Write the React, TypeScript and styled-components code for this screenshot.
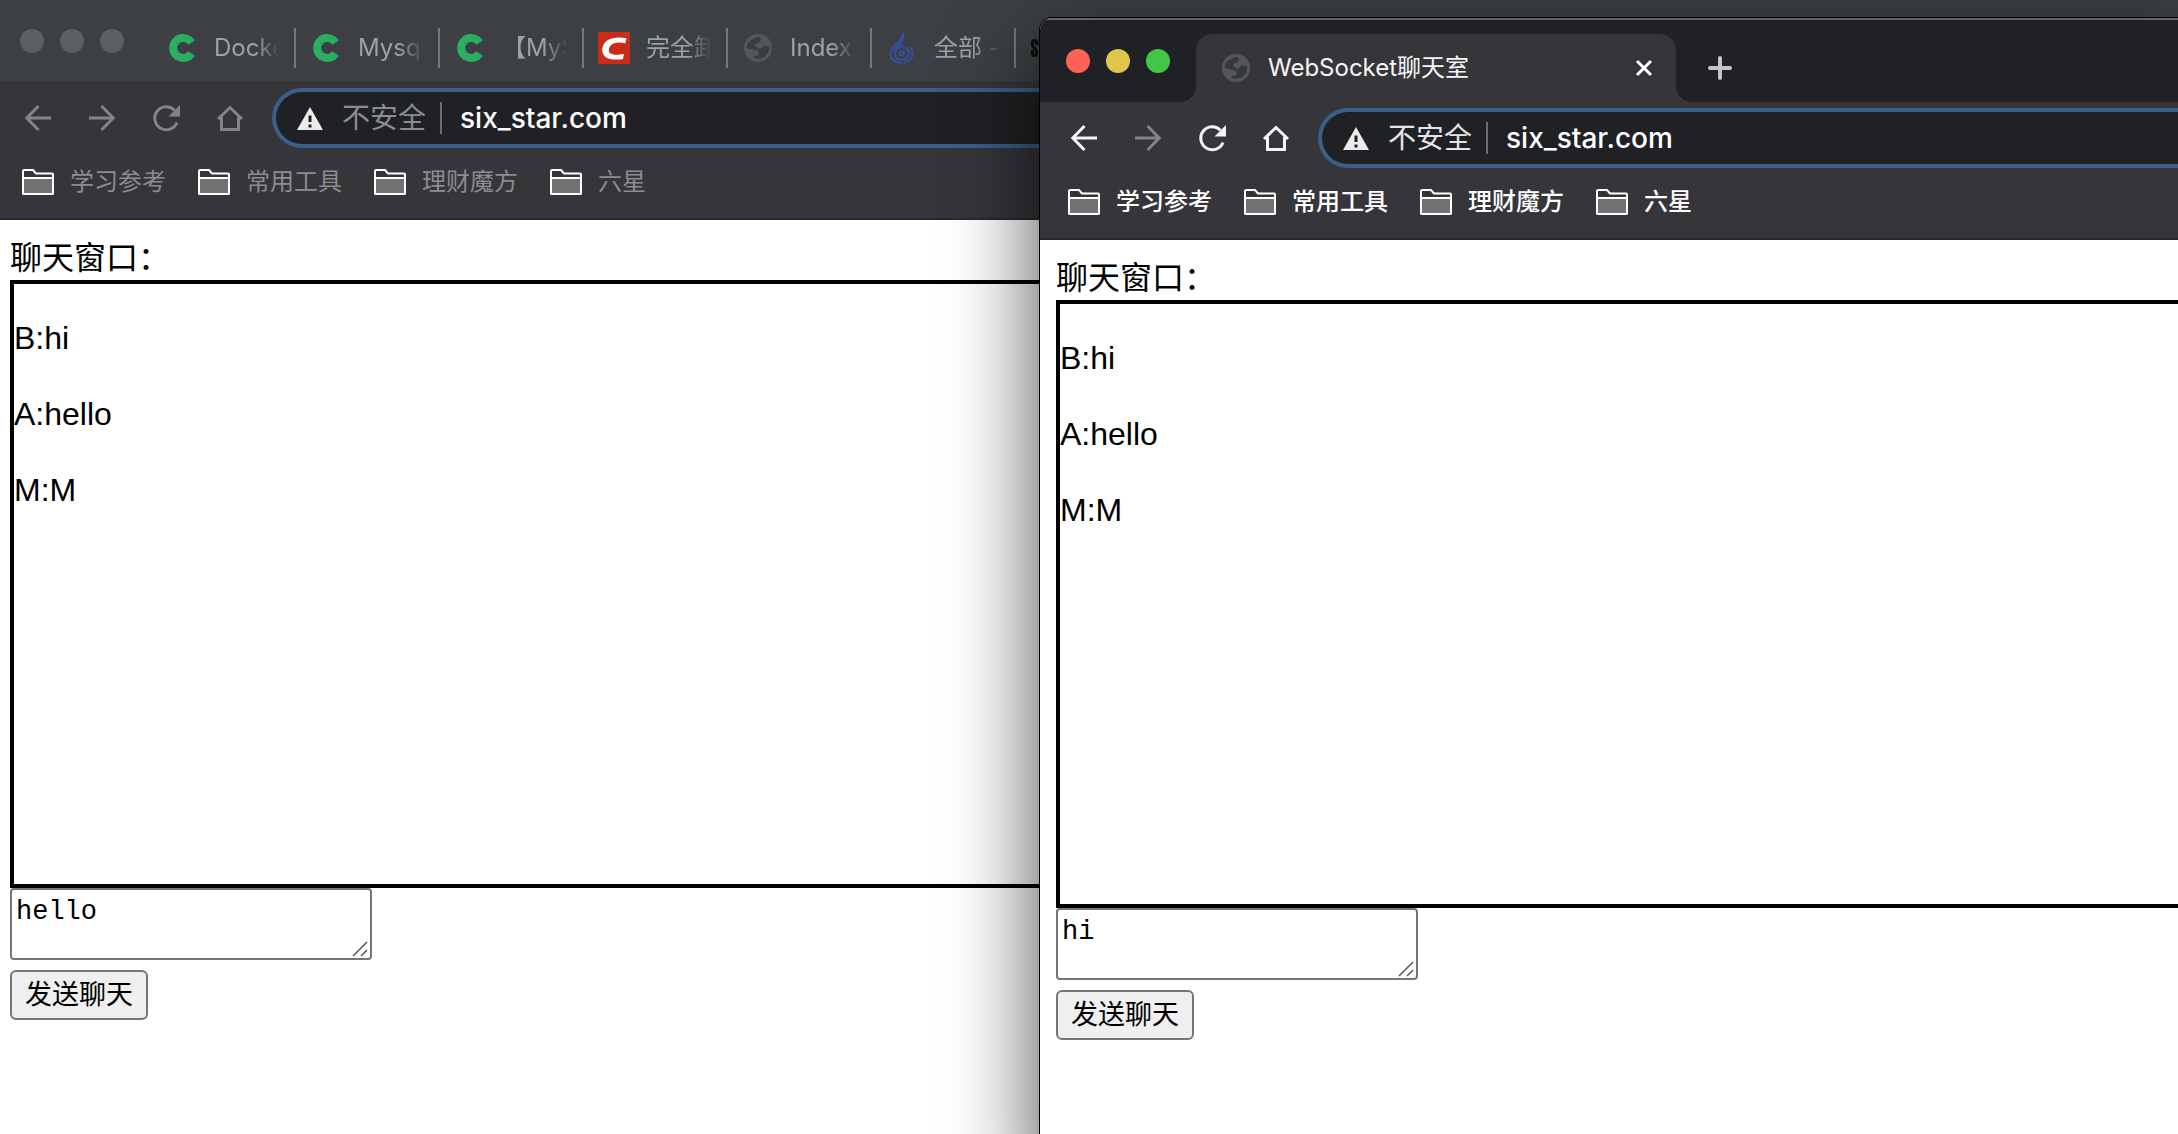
import React from 'react';
import styled, { createGlobalStyle, css } from 'styled-components';

const UI_FONT = `Inter, Roboto, "Liberation Sans", "Noto Sans CJK SC", sans-serif`;
const PAGE_FONT = `"Liberation Sans", "Noto Sans CJK SC", sans-serif`;

const GlobalStyle = createGlobalStyle`
  * { box-sizing: border-box; }
  html, body, #root { height: 100%; margin: 0; }
  body { overflow: hidden; background: #fff; }
  button { font: inherit; margin: 0; }
`;

const Desktop = styled.main`
  position: relative;
  height: 100vh;
  overflow: hidden;
`;

const Window = styled.section<{ $front: boolean }>`
  position: absolute;
  top: ${(p) => (p.$front ? 18 : -2)}px;
  left: ${(p) => (p.$front ? 1040 : -6)}px;
  right: -20px;
  bottom: -40px;
  display: flex;
  flex-direction: column;
  overflow: hidden;
  border-radius: 12px 12px 0 0;
  background: #fff;
  ${(p) =>
    p.$front &&
    css`
      box-shadow: 0 0 0 1px #000, 0 36px 90px rgba(0, 0, 0, 0.72);
    `}
`;

const TabStrip = styled.header<{ $front: boolean }>`
  display: flex;
  height: 84px;
  background: ${(p) => (p.$front ? '#202124' : '#3c4042')};
  border-top: 2px solid ${(p) => (p.$front ? '#646566' : '#3c4042')};
  border-bottom: ${(p) => (p.$front ? '0' : '1px solid #333538')};
`;

const Lights = styled.div`
  display: flex;
  flex: none;
  gap: 16px;
  width: 156px;
  padding: 29px 0 0 26px;
`;

const Light = styled.button<{ $color: string }>`
  width: 24px;
  height: 24px;
  padding: 0;
  border: 0;
  border-radius: 50%;
  background: ${(p) => p.$color};
`;

const Tabs = styled.div`
  display: flex;
  padding-left: 2px;
`;

const Tab = styled.div`
  display: flex;
  align-items: center;
  gap: 16px;
  width: 144px;
  height: 40px;
  margin-top: 28px;
  padding: 0 14px;
  border-right: 2px solid #75787a;
  color: #9fa2a5;
  font: 24px/36px ${UI_FONT};
`;

const TabTitle = styled.span`
  flex: 1;
  min-width: 0;
  overflow: hidden;
  white-space: nowrap;
  mask-image: linear-gradient(to right, #000 62%, transparent);
`;

const ActiveTab = styled.div`
  position: relative;
  display: flex;
  align-items: center;
  gap: 16px;
  width: 480px;
  height: 68px;
  margin-top: 14px;
  padding: 0 20px 0 24px;
  border-radius: 16px 16px 0 0;
  background: #36353a;
  color: #f4f5f6;
  font: 24px/36px ${UI_FONT};

  &::before,
  &::after {
    content: '';
    position: absolute;
    bottom: 0;
    width: 16px;
    height: 16px;
  }
  &::before {
    right: 100%;
    background: radial-gradient(circle at 0 0, transparent 16px, #36353a 16px);
  }
  &::after {
    left: 100%;
    background: radial-gradient(circle at 100% 0, transparent 16px, #36353a 16px);
  }
`;

const ActiveTitle = styled.span`
  flex: 1;
  white-space: nowrap;
`;

const IconButton = styled.button<{ $color: string }>`
  display: grid;
  flex: none;
  place-items: center;
  width: 24px;
  height: 24px;
  padding: 0;
  border: 0;
  background: none;
  color: ${(p) => p.$color};
`;

const NewTab = styled(IconButton)`
  margin: 36px 0 0 32px;
`;

const Toolbar = styled.nav`
  display: flex;
  align-items: center;
  gap: 32px;
  height: 72px;
  padding-left: 28px;
  background: #36353a;
`;

const NavButton = styled(IconButton)`
  width: 32px;
  height: 32px;
`;

const Omnibox = styled.label`
  display: flex;
  flex: 1;
  align-items: center;
  height: 60px;
  margin-left: -6px;
  padding-left: 20px;
  border: 4px solid #3a5f88;
  border-right: 0;
  border-radius: 30px 0 0 30px;
  background: #202124;
  font: 28px/40px ${UI_FONT};
`;

const Security = styled.span<{ $color: string }>`
  padding: 0 14px 0 18px;
  border-right: 2px solid #6b6d70;
  color: ${(p) => p.$color};
  line-height: 32px;
`;

const Address = styled.input`
  flex: 1;
  min-width: 0;
  padding: 0 0 0 18px;
  border: 0;
  outline: 0;
  background: transparent;
  color: #fff;
  font: inherit;
  font-weight: 500;
`;

const Bookmarks = styled.nav`
  display: flex;
  gap: 32px;
  height: 66px;
  padding: 0 28px 8px;
  border-bottom: 2px solid #29282b;
  background: #36353a;
`;

const Bookmark = styled.a<{ $front: boolean }>`
  display: flex;
  align-items: center;
  gap: 16px;
  color: ${(p) => (p.$front ? '#fff' : '#8b8d90')};
  font: ${(p) => (p.$front ? 500 : 400)} 24px/36px ${UI_FONT};
  text-decoration: none;
  white-space: nowrap;
`;

const Page = styled.div`
  padding: 16px;
  color: #000;
  font: 32px/44px ${PAGE_FONT};
`;

const ChatLog = styled.div`
  height: 608px;
  border: 4px solid #000;
`;

const Message = styled.p`
  margin: 32px 0;
`;

const Draft = styled.div`
  position: relative;
  width: 362px;
  height: 72px;
  margin-bottom: 10px;

  svg {
    position: absolute;
    right: 4px;
    bottom: 3px;
  }
`;

const DraftText = styled.textarea`
  display: block;
  width: 100%;
  height: 100%;
  padding: 4px;
  border: 2px solid #767676;
  border-radius: 4px;
  background: #fff;
  color: #000;
  font: 27px/36px "Liberation Mono", monospace;
  resize: none;
  overflow: hidden;
`;

const SendButton = styled.button`
  display: block;
  height: 50px;
  padding: 0 13px;
  border: 2px solid #767676;
  border-radius: 6px;
  background: #efefef;
  color: #000;
  font: 27px/40px ${PAGE_FONT};
`;

const GreenC = () => (
  <svg width="32" height="32" viewBox="0 0 32 32">
    <path d="M25.5 10.500A10 10 0 1 0 25.5 21.500" fill="none" stroke="#2bae60" strokeWidth="8" />
  </svg>
);

const RedC = () => (
  <svg width="32" height="32" viewBox="0 0 32 32">
    <rect width="32" height="32" fill="#c92d17" />
    <path
      d="M28.5 6.2 27.3 11.3C23.5 10.3 19 10 15.5 11.4 10.5 13.4 9.3 20 13 21.8c3.300 1.500 8.500 1.100 12.900.3l-.9 4.800C19.500 28 11.500 28 7.500 25 2.500 21.200 3.300 12.500 9.500 8.300 14.500 5 22 4.800 28.500 6.200Z"
      fill="#fff"
    />
  </svg>
);

const Globe = ({ land }: { land: string }) => (
  <svg width="32" height="32" viewBox="0 0 32 32">
    <circle cx="16" cy="16" r="14" fill="#53565a" />
    <path
      d="M4.500 16C4.500 12 7 8.500 11 7L16 4.800 19 6.500 18.500 9 16.500 11H14L13 13.500 16 16.500H19L21.500 13.300 27.300 14.500C27.500 18 26.500 20.800 24 23.500 21.500 26 17.500 27.500 11.500 26V24H15L17 21.500 16.500 19.500 12.700 18Z"
      fill={land}
    />
  </svg>
);

const Flame = () => (
  <svg width="32" height="32" viewBox="0 0 32 32" fill="none" stroke="#34509e" strokeWidth="2">
    <path d="M17 1C18 9 5 13 4.500 21.500 4.300 27 9 31 15.500 31" />
    <path d="M17 1c3 8-7.500 12-8.500 18.500" />
    <path d="M17 13C12 15 9 18 9 22c0 4 3.200 6 7 6s7-3 7-6.500-3-6-6.500-6" />
    <path d="M23 14.500c6 4 5 15-6 16.500" />
    <circle cx="16" cy="21.500" r="2" />
  </svg>
);

const SwMark = () => (
  <svg width="32" height="32" viewBox="0 0 32 32" fill="none" stroke="#0c0d0e" strokeWidth="3">
    <path d="M6.500 13V10.500a2 2 0 0 0-4 0V13c0 3 4 3.500 4 6.500v2a2 2 0 0 1-4 0V18" />
    <path d="M10 8l1.500 15L14 10l2.500 13L18 8" />
  </svg>
);

const Back = () => (
  <svg width="32" height="32" viewBox="0 0 32 32" fill="none" stroke="currentColor" strokeWidth="3">
    <path d="M29 16H5M16.500 4 4.800 16l11.700 12" />
  </svg>
);

const Forward = () => (
  <svg width="32" height="32" viewBox="0 0 32 32" fill="none" stroke="currentColor" strokeWidth="3">
    <path d="M3 16h24M15.500 4l11.700 12-11.700 12" />
  </svg>
);

const Reload = () => (
  <svg width="32" height="32" viewBox="0 0 32 32">
    <path
      d="M27 20.500A11.500 11.500 0 1 1 24.500 8.200"
      fill="none"
      stroke="currentColor"
      strokeWidth="3"
    />
    <path d="M30 3v11.500H18.500Z" fill="currentColor" />
  </svg>
);

const Home = () => (
  <svg width="32" height="32" viewBox="0 0 32 32" fill="none" stroke="currentColor" strokeWidth="3">
    <path d="M4 17 16 5.500 28 17M7.500 15v12.500h17V15" />
  </svg>
);

const Warning = () => (
  <svg width="28" height="28" viewBox="0 0 28 28">
    <path d="M14 3 27 26H1Z" fill="#ececed" />
    <path d="M14 11.500v6.500M14 20.500v3" stroke="#202124" strokeWidth="3" />
  </svg>
);

const Folder = () => (
  <svg width="32" height="28" viewBox="0 0 32 28" fill="none" stroke="#fff" strokeWidth="2">
    <path d="M1 25V3a1 1 0 0 1 1-1h9l3 3.500h16a1 1 0 0 1 1 1V25a1 1 0 0 1-1 1H2a1 1 0 0 1-1-1Z" />
    <path d="M1 10h30v15a1 1 0 0 1-1 1H2a1 1 0 0 1-1-1Z" fill="#727274" />
  </svg>
);

const Cross = () => (
  <svg width="18" height="18" viewBox="0 0 18 18" stroke="currentColor" strokeWidth="3">
    <path d="M2 2 16 16M16 2 2 16" />
  </svg>
);

const Plus = () => (
  <svg width="24" height="24" viewBox="0 0 24 24" stroke="currentColor" strokeWidth="4" strokeLinecap="round">
    <path d="M12 2v20M2 12h20" />
  </svg>
);

const Grip = () => (
  <svg width="16" height="16" viewBox="0 0 16 16" stroke="#555" strokeWidth="1.500">
    <path d="M1 15 15 1M9 15l6-6" />
  </svg>
);

const backgroundTabs = [
  { icon: <GreenC />, title: 'Docker' },
  { icon: <GreenC />, title: 'Mysql' },
  { icon: <GreenC />, title: '【MySQL' },
  { icon: <RedC />, title: '完全卸载' },
  { icon: <Globe land="#3b3e41" />, title: 'Index' },
  { icon: <Flame />, title: '全部 - ' },
  { icon: <SwMark />, title: '' },
];

const bookmarks = ['学习参考', '常用工具', '理财魔方', '六星'];
const messages = ['B:hi', 'A:hello', 'M:M'];

function BrowserWindow({ front, draft }: { front: boolean; draft: string }) {
  const lights = front ? ['#fe6158', '#e0c54c', '#43c645'] : ['#5c5f62', '#5c5f62', '#5c5f62'];
  const icon = front ? '#f4f4f5' : '#848487';
  const draftId = front ? 'draft-front' : 'draft-back';

  return (
    <Window $front={front}>
      <TabStrip $front={front}>
        <Lights>
          {['关闭', '最小化', '全屏'].map((name, i) => (
            <Light key={name} $color={lights[i]} aria-label={name} />
          ))}
        </Lights>
        {front ? (
          <>
            <ActiveTab>
              <Globe land="#36373b" />
              <ActiveTitle>WebSocket聊天室</ActiveTitle>
              <IconButton $color="#fff" aria-label="关闭标签页">
                <Cross />
              </IconButton>
            </ActiveTab>
            <NewTab $color="#c3c5c9" aria-label="新标签页">
              <Plus />
            </NewTab>
          </>
        ) : (
          <Tabs>
            {backgroundTabs.map((tab, i) => (
              <Tab key={i}>
                {tab.icon}
                <TabTitle>{tab.title}</TabTitle>
              </Tab>
            ))}
          </Tabs>
        )}
      </TabStrip>
      <Toolbar>
        <NavButton $color={icon} aria-label="后退"><Back /></NavButton>
        <NavButton $color="#848487" aria-label="前进"><Forward /></NavButton>
        <NavButton $color={icon} aria-label="重新加载"><Reload /></NavButton>
        <NavButton $color={icon} aria-label="主页"><Home /></NavButton>
        <Omnibox>
          <Warning />
          <Security $color={front ? '#e4e5e7' : '#8b8d90'}>不安全</Security>
          <Address defaultValue="six_star.com" spellCheck={false} />
        </Omnibox>
      </Toolbar>
      <Bookmarks>
        {bookmarks.map((name) => (
          <Bookmark key={name} href="#" $front={front}>
            <Folder />
            {name}
          </Bookmark>
        ))}
      </Bookmarks>
      <Page>
        <label htmlFor={draftId}>聊天窗口：</label>
        <ChatLog>
          {messages.map((message) => (
            <Message key={message}>{message}</Message>
          ))}
        </ChatLog>
        <Draft>
          <DraftText id={draftId} defaultValue={draft} spellCheck={false} />
          <Grip />
        </Draft>
        <SendButton>发送聊天</SendButton>
      </Page>
    </Window>
  );
}

export default function App() {
  return (
    <>
      <GlobalStyle />
      <Desktop>
        <BrowserWindow front={false} draft="hello" />
        <BrowserWindow front draft="hi" />
      </Desktop>
    </>
  );
}
